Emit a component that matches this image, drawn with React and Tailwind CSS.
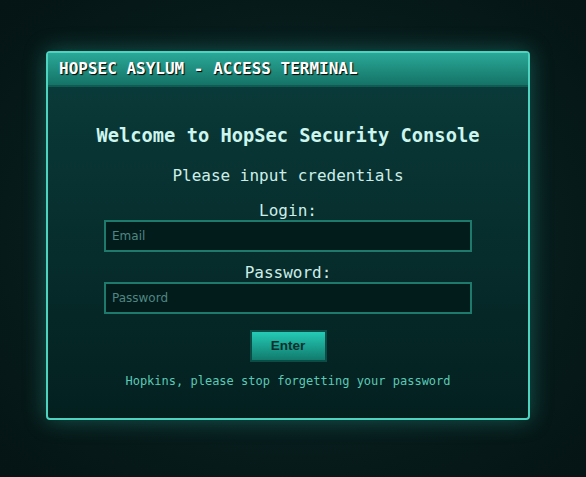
import React from 'react';

const mono = { fontFamily: '"DejaVu Sans Mono", monospace' };

export default function App() {
    return (
        <div className="min-h-screen w-full bg-[radial-gradient(ellipse_at_center,#0c2c2c_0%,#071c1c_60%,#051414_100%)] pt-[51px] pl-[46px]" style={mono}>
            <div className="w-[484px] h-[369px] rounded-[4px] border-2 border-[#4fd3c1] bg-[linear-gradient(to_bottom,#0a3c3b,#03201f)] shadow-[0_0_22px_rgba(45,200,180,0.35)] flex flex-col">
                <div className="h-[34px] bg-[linear-gradient(to_bottom,#2aa898,#147366)] border-b-2 border-[#0f5a52] flex items-center pl-[11px]">
                    <h1 className="text-[16px] font-bold text-white [text-shadow:1px_1px_1px_#000]">HOPSEC ASYLUM - ACCESS TERMINAL</h1>
                </div>
                <div className="flex flex-col items-center pt-[35px]">
                    <h2 className="text-[18.72px] leading-[28px] font-bold text-[#cdf5ee]">Welcome to HopSec Security Console</h2>
                    <p className="mt-[14px] text-[16px] leading-[24px] text-[#cdeee8]">Please input credentials</p>
                    <form className="flex flex-col items-center" onSubmit={e => e.preventDefault()}>
                        <label className="mt-[14px] text-[16px] leading-[18px] text-[#cdeee8]">Login:</label>
                        <input
                            type="email"
                            placeholder="Email"
                            className="w-[368px] h-[32px] px-[6px] bg-[#021b1b] border-2 border-[#1e7a6d] text-[12px] text-[#cdeee8] placeholder:text-[#4e8782] outline-none"
                            style={{ fontFamily: '"DejaVu Sans", sans-serif' }}
                        />
                        <label className="mt-[12px] text-[16px] leading-[18px] text-[#cdeee8]">Password:</label>
                        <input
                            type="password"
                            placeholder="Password"
                            className="w-[368px] h-[32px] px-[6px] bg-[#021b1b] border-2 border-[#1e7a6d] text-[12px] text-[#cdeee8] placeholder:text-[#4e8782] outline-none"
                            style={{ fontFamily: '"DejaVu Sans", sans-serif' }}
                        />
                        <button
                            type="submit"
                            className="mt-[16px] w-[77px] h-[32px] bg-[linear-gradient(to_bottom,#24cbb6,#117b6d)] border-2 border-[#0c4c46] text-[13.5px] font-bold text-[#0a302d]"
                            style={{ fontFamily: '"Liberation Sans", sans-serif' }}
                        >
                            Enter
                        </button>
                    </form>
                    <p className="mt-[11px] text-[12px] leading-[16px] text-[#5cc9b6]">Hopkins, please stop forgetting your password</p>
                </div>
            </div>
        </div>
    );
}
